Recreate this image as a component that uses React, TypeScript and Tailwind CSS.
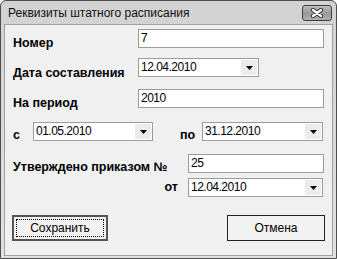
import React from 'react';

const labelCls = "font-['Liberation_Sans',Arial,sans-serif] text-[12.5px] leading-[16px] font-bold text-black";
const fieldCls =
  "h-[19px] border border-[#9c9c9c] bg-white flex items-start font-['Liberation_Sans',Arial,sans-serif] text-[12px] leading-[15px] tracking-[-0.5px] text-black";

function TextBox({ value, width }: { value: string; width: string }) {
  return (
    <div className={`${fieldCls} ${width} pl-[2px] pt-[1px]`}>
      <span>{value}</span>
    </div>
  );
}

function ComboBox({ value, width }: { value: string; width: string }) {
  return (
    <div className={`${fieldCls} ${width}`}>
      <span className="flex-1 pl-[2px] pt-[1px]">{value}</span>
      <span className="w-[16px] h-[15px] mt-[1px] mr-[1px] bg-[#ececec] flex items-center justify-center">
        <svg width="7" height="4" viewBox="0 0 7 4">
          <path d="M0 0h7L3.5 4z" fill="#000" />
        </svg>
      </span>
    </div>
  );
}

export default function App() {
  return (
    <div className="w-[337px] h-[259px] rounded-t-[6px] border border-[#4e4e4e] bg-gradient-to-b from-[#d2d2d2] to-[#e2e2e2] flex flex-col">
      <div className="h-[23px] flex items-start justify-between pl-[7px] pr-[4px]">
        <span className="mt-[5px] font-['Liberation_Sans',Arial,sans-serif] text-[12px] leading-[15px] text-[#111]">
          Реквизиты штатного расписания
        </span>
        <div className="mt-[4px] w-[30px] h-[16px] rounded-[3px] border border-[#3e3e3e] bg-gradient-to-b from-[#bdbdbd] via-[#9a9a9a] to-[#b0b0b0] flex items-center justify-center">
          <svg width="14" height="10" viewBox="0 0 14 10">
            <path d="M3 2l8 6M11 2L3 8" stroke="#333" strokeWidth="4.2" strokeLinecap="round" />
            <path d="M3 2l8 6M11 2L3 8" stroke="#fff" strokeWidth="2.2" strokeLinecap="round" />
          </svg>
        </div>
      </div>
      <div className="flex-1 mx-[3px] mb-[2px] border border-[#a0a0a0] bg-[#f0f0f0] flex flex-col">
        <div className="h-[19px] flex items-start pl-[8px] mt-[4px]">
          <span className={`${labelCls} w-[125px] pt-[6px]`}>Номер</span>
          <TextBox value="7" width="w-[186px]" />
        </div>
        <div className="h-[19px] flex items-start pl-[8px] mt-[10px]">
          <span className={`${labelCls} w-[125px] pt-[7px]`}>Дата составления</span>
          <ComboBox value="12.04.2010" width="w-[121px]" />
        </div>
        <div className="h-[19px] flex items-start pl-[8px] mt-[12px]">
          <span className={`${labelCls} w-[125px] pt-[6px]`}>На период</span>
          <TextBox value="2010" width="w-[186px]" />
        </div>
        <div className="h-[19px] flex items-start pl-[8px] mt-[14px]">
          <span className={`${labelCls} w-[20px] pt-[5px]`}>с</span>
          <ComboBox value="01.05.2010" width="w-[120px]" />
          <span className={`${labelCls} w-[22px] ml-[27px] pt-[5px]`}>по</span>
          <ComboBox value="31.12.2010" width="w-[121px]" />
        </div>
        <div className="h-[19px] flex items-start pl-[8px] mt-[13px]">
          <span className={`${labelCls} w-[175px] pt-[5px]`}>Утверждено приказом №</span>
          <TextBox value="25" width="w-[136px]" />
        </div>
        <div className="h-[19px] flex items-start pl-[8px] mt-[5px]">
          <span className={`${labelCls} w-[175px] pr-[10px] pt-[1px] text-right`}>от</span>
          <ComboBox value="12.04.2010" width="w-[135px]" />
        </div>
        <div className="h-[26px] flex items-start pl-[7px] mt-[18px] font-['Liberation_Sans',Arial,sans-serif] text-[12px] text-black">
          <button className="w-[96px] h-[26px] border-[2px] border-[#555] bg-[#f2f2f2] p-[2px] flex">
            <span className="flex-1 border border-dotted border-black flex items-center justify-center leading-[14px]">
              Сохранить
            </span>
          </button>
          <button className="ml-[119px] w-[98px] h-[26px] border border-[#222] bg-[#f2f2f2] flex items-center justify-center leading-[14px]">
            Отмена
          </button>
        </div>
      </div>
    </div>
  );
}
